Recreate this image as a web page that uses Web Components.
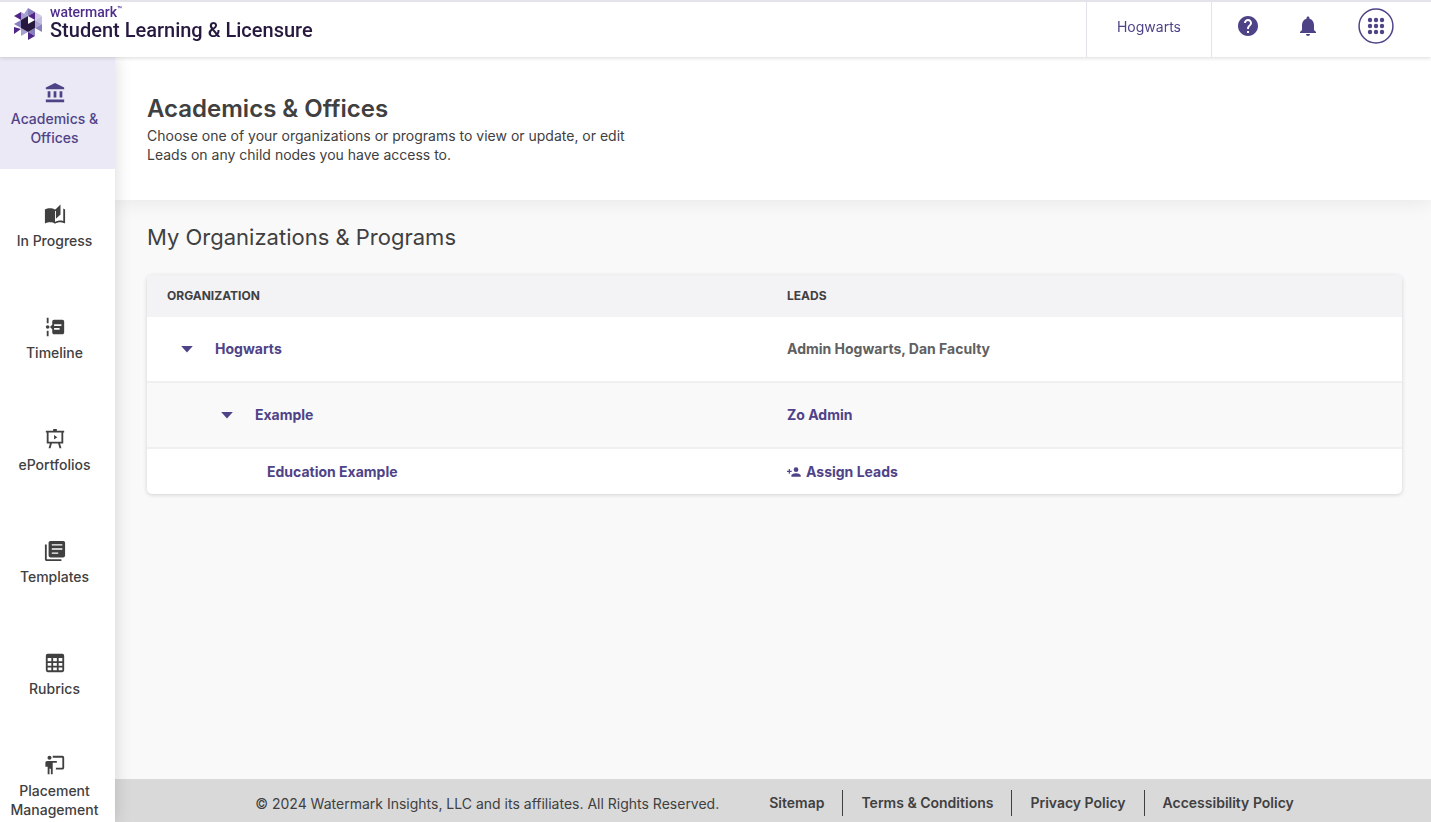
<!DOCTYPE html>
<html lang="en">
<head>
<meta charset="UTF-8">
<meta name="viewport" content="width=device-width, initial-scale=1">
<title>Academics &amp; Offices - Student Learning &amp; Licensure</title>
<style>
  :root {
    --purple: #4f4388;
    --text: #404041;
    --line: #e4e3ea;
  }
  body {
    margin: 0;
    font-family: Inter, "Liberation Sans", sans-serif;
    font-size: 14px;
    line-height: 19px;
    color: var(--text);
  }
</style>
</head>
<body>
<app-shell>
  <app-header slot="header" account="Hogwarts"></app-header>
  <side-nav slot="nav">
    <nav-item icon="bank" active>Academics &amp; Offices</nav-item>
    <nav-item icon="book">In Progress</nav-item>
    <nav-item icon="timeline">Timeline</nav-item>
    <nav-item icon="easel">ePortfolios</nav-item>
    <nav-item icon="library">Templates</nav-item>
    <nav-item icon="grid">Rubrics</nav-item>
    <nav-item icon="teacher">Placement Management</nav-item>
  </side-nav>
  <page-intro>
    <span slot="title">Academics &amp; Offices</span>
    Choose one of your organizations or programs to view or update, or edit Leads on any child nodes you have access to.
  </page-intro>
  <org-section>My Organizations &amp; Programs</org-section>
  <app-footer slot="footer">
    <span slot="copyright">© 2024 Watermark Insights, LLC and its affiliates. All Rights Reserved.</span>
  </app-footer>
</app-shell>

<script>
const ICONS = {
  bank: '<path d="M4 10v7h3v-7H4zm6.500 0v7h3v-7h-3zM2 22h20v-3H2v3zm15-12v7h3v-7h-3zM12 1L2 6v2h20V6L12 1z"/>',
  book: '<path d="M17.500 4.500c-1.950 0-4.050.4-5.500 1.500-1.450-1.100-3.550-1.500-5.500-1.500S2.450 4.900 1 6v14.650c0 .25.25.5.5.5.1 0 .15-.05.25-.05C3.100 20.450 5.050 20 6.500 20c1.950 0 4.050.4 5.500 1.500 1.350-.85 3.800-1.500 5.500-1.500 1.650 0 3.350.3 4.750 1.050.1.05.15.05.25.05.25 0 .5-.25.5-.5V6c-.6-.45-1.250-.75-2-1v13.500c-1.100-.35-2.300-.5-3.500-.5-1.700 0-4.150.65-5.500 1.500V8l1-.7V16l5-4.500V.5l-5 5"/>',
  timeline: '<path d="M3 2h2v6H3zM3 16h2v6H3z"/><circle cx="4" cy="12" r="2"/><path d="M20 4H11C9.900 4 9 4.900 9 6v3.500L6.500 12 9 14.500V18c0 1.100.9 2 2 2h9c1.100 0 2-.9 2-2V6c0-1.100-.9-2-2-2zm-3 11h-6v-2h6v2zm2-4h-8V9h8v2z"/>',
  easel: '<path d="M10 1h4v2h8v2h-1v12h-3.500l1.500 5h-2.100l-1.500-5H8.600l-1.500 5H5l1.500-5H3V5H2V3h8zM5 5v10h14V5zM11 7.500l3.500 2.500L11 12.500z"/>',
  library: '<path d="M3 5H1v16c0 1.100.9 2 2 2h16v-2H3V5zm18-4H7c-1.100 0-2 .9-2 2v14c0 1.100.9 2 2 2h14c1.100 0 2-.9 2-2V3c0-1.100-.9-2-2-2zm-1 9.500H8.500V9H20v1.500zm-4.500 4.500h-7v-1.500h7V15zM20 6H8.500V4.500H20V6z"/>',
  grid: '<path fill-rule="evenodd" d="M4 2h16a2 2 0 0 1 2 2v16a2 2 0 0 1-2 2H4a2 2 0 0 1-2-2V4a2 2 0 0 1 2-2zM4 6.500v3.500h4V6.500zm6 0v3.500h4V6.500zm6 0v3.500h4V6.500zM4 12v3h4v-3zm6 0v3h4v-3zm6 0v3h4v-3zM4 17v3h4v-3zm6 0v3h4v-3zm6 0v3h4v-3z"/>',
  teacher: '<circle cx="6" cy="4" r="2.200"/><path d="M20 2H9.500v2H20v11h-7v2h7c1.100 0 2-.9 2-2V4c0-1.100-.9-2-2-2zM14 7.500v2H9.500V22h-2v-6H6v6H4v-8H1.500V9.500c0-1.100.9-2 2-2z"/>',
  help: '<path d="M12 2C6.480 2 2 6.480 2 12s4.480 10 10 10 10-4.480 10-10S17.520 2 12 2zm1 17h-2v-2h2v2zm2.070-7.750l-.9.92C13.450 12.900 13 13.500 13 15h-2v-.5c0-1.100.45-2.100 1.170-2.830l1.240-1.260c.37-.36.59-.86.59-1.410 0-1.100-.9-2-2-2s-2 .9-2 2H8c0-2.210 1.790-4 4-4s4 1.790 4 4c0 .88-.36 1.680-.93 2.250z"/>',
  bell: '<path d="M12 22c1.100 0 2-.9 2-2h-4c0 1.100.9 2 2 2zm6-6v-5c0-3.070-1.640-5.640-4.500-6.320V4c0-.83-.67-1.500-1.500-1.500s-1.500.67-1.500 1.500v.68C7.630 5.360 6 7.920 6 11v5l-2 2v1h16v-1l-2-2z"/>',
  apps: '<circle cx="12" cy="12" r="11.300" fill="none" stroke="currentColor"/>' +
    [8, 12, 16].map(y => [8, 12, 16].map(x => `<circle cx="${x}" cy="${y}" r="1.450"/>`).join('')).join(''),
  caret: '<path d="M2 7h20L12 18z"/>',
  assign: '<circle cx="15.500" cy="8" r="4"/><path d="M15.500 14c-2.700 0-8 1.300-8 4v2h16v-2c0-2.700-5.300-4-8-4zM5 10V7H3v3H0v2h3v3h2v-3h3v-2z"/>'
};

class UiIcon extends HTMLElement {
  connectedCallback() {
    this.attachShadow({ mode: 'open' });
    this.shadowRoot.innerHTML = `
      <style>
        :host { display: inline-block; width: var(--size, 24px); height: var(--size, 24px); flex: none; }
        svg { display: block; width: 100%; height: 100%; fill: currentColor; }
      </style>
      <svg viewBox="0 0 24 24" aria-hidden="true">${ICONS[this.getAttribute('name')]}</svg>
    `;
  }
}

class AppShell extends HTMLElement {
  connectedCallback() {
    this.attachShadow({ mode: 'open' });
    this.shadowRoot.innerHTML = `
      <style>
        :host { display: flex; flex-direction: column; height: 100vh; overflow: hidden; }
        .body { display: flex; flex: 1; min-height: 0; }
        .page { display: flex; flex-direction: column; flex: 1; min-width: 0; background: #f9f9f9; }
        main { flex: 1; min-height: 0; overflow: auto; }
      </style>
      <slot name="header"></slot>
      <div class="body">
        <slot name="nav"></slot>
        <div class="page">
          <main><slot></slot></main>
          <slot name="footer"></slot>
        </div>
      </div>
    `;
  }
}

class BrandLogo extends HTMLElement {
  connectedCallback() {
    this.attachShadow({ mode: 'open' });
    this.shadowRoot.innerHTML = `
      <style>
        :host { display: block; }
        a { display: flex; align-items: center; gap: 7px; color: #26183f; text-decoration: none; font-family: Roboto, sans-serif; font-weight: 500; }
        svg { display: block; width: 30px; height: 34px; }
        .name { display: flex; flex-direction: column; }
        .brand { display: flex; font-size: 14px; line-height: 12px; color: #4f2d8c; }
        .brand small { font-size: 8px; line-height: 8px; }
        .product { font-size: 20px; line-height: 24px; }
      </style>
      <a href="#">
        <svg viewBox="0 0 30 34" aria-hidden="true">
          <path fill="#8780bd" d="M15 1l7 4-7 4z"/>
          <path fill="#a59fd0" d="M15 1v8l-4-2z"/>
          <path fill="#4f2587" d="M22 5v8l-7-4zM1 9l7-4v8z"/>
          <path fill="#a59fd0" d="M8 5l7 4-7 4z"/>
          <path fill="#c4bce0" d="M22 13l7-4v8z"/>
          <path fill="#ada5d3" d="M22 13v8l7-4z"/>
          <path fill="#d0cae6" d="M22 5l7 4-7 4z"/>
          <path fill="#8780bd" d="M8 13v8l-7-4z"/>
          <path fill="#8780bd" d="M29 17v8l-7-4z"/>
          <path fill="#4f2587" d="M1 20l7 2-7 5z"/>
          <path fill="#a59fd0" d="M8 21l7 4-7 4z"/>
          <path fill="#8780bd" d="M22 21v8l-7-4z"/>
          <path fill="#4f2587" d="M15 25l7 4-7 4z"/>
          <path fill="#26183f" d="M8 13l7-4v8l7-4v8l-7 4-7-4z"/>
        </svg>
        <span class="name">
          <span class="brand">watermark<small>™</small></span>
          <span class="product">Student Learning &amp; Licensure</span>
        </span>
      </a>
    `;
  }
}

class AppHeader extends HTMLElement {
  connectedCallback() {
    this.attachShadow({ mode: 'open' });
    this.shadowRoot.innerHTML = `
      <style>
        :host {
          display: block;
          position: relative;
          z-index: 2;
          background: #fff;
          border-top: 2px solid var(--line);
          box-shadow: 0 1px 4px rgba(0, 0, 0, 0.15);
          color: var(--purple);
        }
        header { display: flex; justify-content: space-between; height: 55px; }
        brand-logo { padding: 4px 0 0 13px; }
        .tools { display: flex; align-items: stretch; }
        button { font: inherit; color: inherit; background: none; border: 0; padding: 0; cursor: pointer; }
        .account { padding: 0 30px 7px; border: solid var(--line); border-width: 0 1px; }
        .actions { display: flex; align-items: center; gap: 36px; padding: 0 37px 7px 24px; }
        .actions button { display: flex; }
        .apps { margin-left: 2px; --size: 36px; }
      </style>
      <header>
        <brand-logo></brand-logo>
        <div class="tools">
          <button class="account">${this.getAttribute('account')}</button>
          <div class="actions">
            <button aria-label="Help"><ui-icon name="help"></ui-icon></button>
            <button aria-label="Notifications"><ui-icon name="bell"></ui-icon></button>
            <button class="apps" aria-label="Apps"><ui-icon name="apps"></ui-icon></button>
          </div>
        </div>
      </header>
    `;
  }
}

class SideNav extends HTMLElement {
  connectedCallback() {
    this.attachShadow({ mode: 'open' });
    this.shadowRoot.innerHTML = `
      <style>
        :host {
          display: block;
          flex: none;
          width: 115px;
          position: relative;
          z-index: 1;
          background: #fff;
          box-shadow: 0 0 16px rgba(0, 0, 0, 0.16);
          overflow-y: auto;
          scrollbar-width: none;
        }
      </style>
      <nav><slot></slot></nav>
    `;
  }
}

class NavItem extends HTMLElement {
  connectedCallback() {
    this.attachShadow({ mode: 'open' });
    this.shadowRoot.innerHTML = `
      <style>
        :host { display: block; }
        a {
          display: flex;
          flex-direction: column;
          align-items: center;
          justify-content: center;
          gap: 5px;
          box-sizing: border-box;
          height: 112px;
          padding: 3px 8px 0 2px;
          text-align: center;
          font-weight: 500;
          color: inherit;
          text-decoration: none;
        }
        :host([active]) a { background: #ebe9f5; color: var(--purple); }
        ui-icon { --size: 22px; }
      </style>
      <a href="#"><ui-icon name="${this.getAttribute('icon')}"></ui-icon><span><slot></slot></span></a>
    `;
  }
}

class PageIntro extends HTMLElement {
  connectedCallback() {
    this.attachShadow({ mode: 'open' });
    this.shadowRoot.innerHTML = `
      <style>
        :host { display: block; background: #fff; padding: 36px 32px; box-shadow: 0 2px 20px rgba(0, 0, 0, 0.08); }
        h1 { margin: 0 0 1px; font-size: 24px; line-height: 32px; font-weight: 600; }
        p { margin: 0; max-width: 500px; }
      </style>
      <h1><slot name="title"></slot></h1>
      <p><slot></slot></p>
    `;
  }
}

const ORGS = [
  { name: 'Hogwarts', level: 0, open: true, leads: 'Admin Hogwarts, Dan Faculty', kind: 'static' },
  { name: 'Example', level: 1, open: true, leads: 'Zo Admin', kind: 'link' },
  { name: 'Education Example', level: 2, open: false, leads: 'Assign Leads', kind: 'assign' }
];

class OrgSection extends HTMLElement {
  connectedCallback() {
    this.attachShadow({ mode: 'open' });
    this.shadowRoot.innerHTML = `
      <style>
        :host { display: block; padding: 21px 29px 24px 32px; }
        h2 { margin: 0 0 21px; font-size: 22px; line-height: 33px; font-weight: 400; }
      </style>
      <h2><slot></slot></h2>
      <org-table></org-table>
    `;
  }
}

class OrgTable extends HTMLElement {
  connectedCallback() {
    this.attachShadow({ mode: 'open' });
    this.shadowRoot.innerHTML = `
      <style>
        :host { display: block; border-radius: 5px; overflow: hidden; background: #fff; box-shadow: 0 1px 4px rgba(0, 0, 0, 0.16); }
        table { width: 100%; border-collapse: separate; border-spacing: 0; table-layout: fixed; }
        th { height: 41px; padding: 0 20px 1px; text-align: left; font-size: 12px; font-weight: 700; background: #f3f3f6; }
        th:first-child { width: 580px; }
        td { height: 63px; padding: 0 20px 1px; font-weight: 700; color: #606062; border-bottom: 2px solid #f0f0f1; }
        tr:nth-child(even) td { background: #f9f9f9; }
        tr:last-child td { height: 45px; padding-bottom: 0; border-bottom: 0; }
        .org { display: flex; align-items: center; gap: 20px; }
        .level-0 { padding-left: 12px; }
        .level-1 { padding-left: 52px; }
        .level-2 { padding-left: 100px; }
        a { color: var(--purple); text-decoration: none; }
        button { display: flex; align-items: center; gap: 5px; padding: 0; border: 0; background: none; font: inherit; color: var(--purple); cursor: pointer; }
        .toggle { padding: 0 1px; --size: 14px; }
        .assign { --size: 14px; }
      </style>
      <table>
        <thead><tr><th scope="col">ORGANIZATION</th><th scope="col">LEADS</th></tr></thead>
        <tbody>${ORGS.map(org => this.row(org)).join('')}</tbody>
      </table>
    `;
  }

  row(org) {
    const toggle = org.open
      ? `<button class="toggle" aria-expanded="true" aria-label="Collapse ${org.name}"><ui-icon name="caret"></ui-icon></button>`
      : '';
    let leads = org.leads;
    if (org.kind === 'link') leads = `<a href="#">${leads}</a>`;
    if (org.kind === 'assign') leads = `<button class="assign"><ui-icon name="assign"></ui-icon>${leads}</button>`;
    return `<tr><td><div class="org level-${org.level}">${toggle}<a href="#">${org.name}</a></div></td><td>${leads}</td></tr>`;
  }
}

class AppFooter extends HTMLElement {
  connectedCallback() {
    this.attachShadow({ mode: 'open' });
    this.shadowRoot.innerHTML = `
      <style>
        :host { display: block; background: #d9d9d9; }
        footer { display: flex; justify-content: center; align-items: center; gap: 50px; padding: 11px 0 6px 3px; }
        nav { display: flex; }
        a { padding: 0 18px; line-height: 26px; font-weight: 600; color: inherit; text-decoration: none; border-right: 1px solid var(--text); }
        a:first-child { padding-left: 0; }
        a:last-child { padding-right: 0; border-right: 0; }
      </style>
      <footer>
        <slot name="copyright"></slot>
        <nav aria-label="Footer">
          <a href="#">Sitemap</a>
          <a href="#">Terms &amp; Conditions</a>
          <a href="#">Privacy Policy</a>
          <a href="#">Accessibility Policy</a>
        </nav>
      </footer>
    `;
  }
}

customElements.define('ui-icon', UiIcon);
customElements.define('app-shell', AppShell);
customElements.define('brand-logo', BrandLogo);
customElements.define('app-header', AppHeader);
customElements.define('side-nav', SideNav);
customElements.define('nav-item', NavItem);
customElements.define('page-intro', PageIntro);
customElements.define('org-section', OrgSection);
customElements.define('org-table', OrgTable);
customElements.define('app-footer', AppFooter);
</script>
</body>
</html>
